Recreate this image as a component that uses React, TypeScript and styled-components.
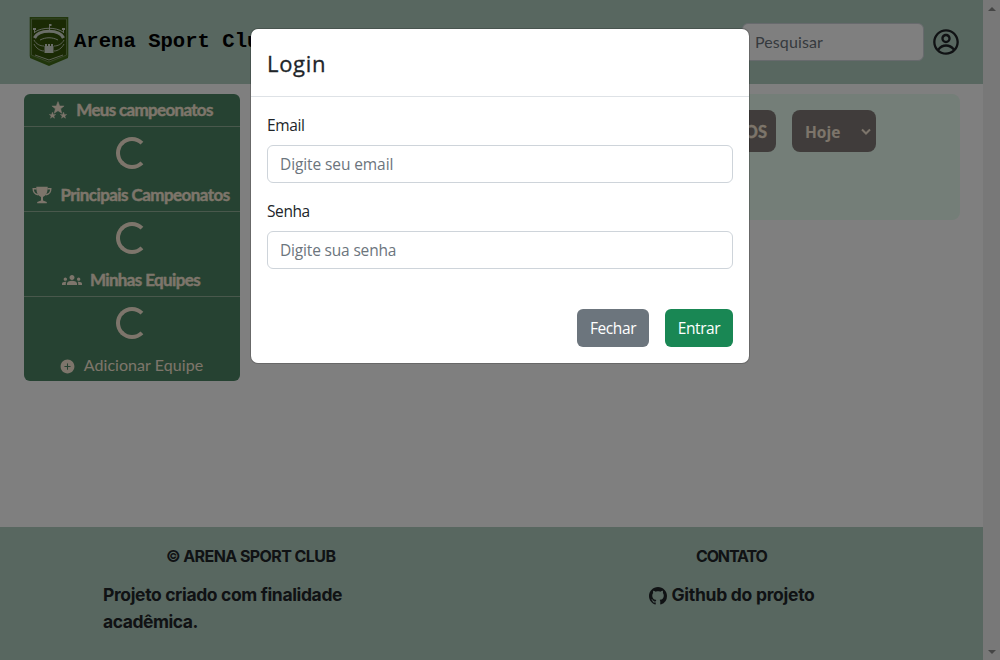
import React from "react";
import styled, { createGlobalStyle } from "styled-components";
import { CgProfile } from "react-icons/cg";
import { IoAddCircle } from "react-icons/io5";
import { MdGroups } from "react-icons/md";
import { BsGithub } from "react-icons/bs";

const GlobalStyle = createGlobalStyle`
  *, *::before, *::after { box-sizing: border-box; }
  body { margin: 0; overflow: hidden; background: #fff; color: #212529; font: 16px/24px "Open Sans", sans-serif; }
`;

const Viewport = styled.div`
  position: relative;
  display: flex;
  height: 660px;
`;
const Page = styled.div`
  flex: 1;
  display: flex;
  flex-direction: column;
`;
const Header = styled.header`
  height: 84px;
  flex: none;
  display: flex;
  align-items: center;
  padding: 0 23px 0 29px;
  background: #b0cec0;
`;
const Brand = styled.div`
  flex: 1;
  display: flex;
  align-items: center;
  gap: 5px;
  font: bold 20.6px/30px "Liberation Mono", monospace;
  color: #000;
`;
const Search = styled.input`
  width: 182px;
  height: 38px;
  margin-right: 8px;
  padding: 5px 12px 7px;
  border: 1px solid #ced4da;
  border-radius: 6px;
  background: #fff;
  font: 16px/24px Lato, sans-serif;
  letter-spacing: 0.1px;
  &::placeholder { color: #6c757d; opacity: 1; }
`;
const Content = styled.div`
  flex: 1;
  display: flex;
  align-items: flex-start;
  gap: 16px;
  padding: 10px 23px 0 24px;
`;
const Sidebar = styled.aside`
  width: 216px;
  height: 287px;
  border-radius: 6px;
  background: #4c8464;
  color: #faebd7;
  font-family: Lato, sans-serif;
`;
const SideTitle = styled.div<{ $plain?: boolean; $gap: number; $spacing: number }>`
  height: ${(p) => (p.$plain ? 32 : 33)}px;
  display: flex;
  align-items: center;
  justify-content: center;
  gap: ${(p) => p.$gap}px;
  padding-right: 2px;
  border-bottom: ${(p) => (p.$plain ? "none" : "1px solid #92b099")};
  font-size: ${(p) => (p.$plain ? 16 : 17)}px;
  font-weight: ${(p) => (p.$plain ? 400 : 700)};
  -webkit-text-stroke: ${(p) => (p.$plain ? 0 : 0.4)}px currentColor;
  letter-spacing: ${(p) => p.$spacing}px;
  white-space: nowrap;
  svg { flex: none; margin-top: ${(p) => (p.$plain ? 2 : 0)}px; }
`;
const SpinnerBox = styled.div`
  height: 52px;
  display: flex;
  justify-content: center;
  align-items: center;
`;
const Spinner = styled.div`
  width: 32px;
  height: 32px;
  border: 4px solid #faebd7;
  border-right-color: transparent;
  border-radius: 50%;
`;
const Panel = styled.main`
  flex: 1;
  height: 126px;
  display: flex;
  justify-content: flex-end;
  gap: 16px;
  padding: 16px 84px 0 16px;
  border-radius: 8px;
  background: #e8fcf0;
`;
const Pill = styled.button<{ $width: number }>`
  width: ${(p) => p.$width}px;
  height: 42px;
  display: flex;
  align-items: center;
  justify-content: space-between;
  padding: 2px 5px 0 13px;
  border: 0;
  border-radius: 8px;
  background: #807976;
  color: #faebd7;
  font: 700 15.5px/24px "Open Sans", sans-serif;
`;
const LivePill = styled(Pill)`
  padding: 1px 9px 0;
  justify-content: flex-end;
  font: 700 16.5px/24px Lato, sans-serif;
  -webkit-text-stroke: 0.4px currentColor;
`;
const Footer = styled.footer`
  height: 133px;
  flex: none;
  display: grid;
  grid-template-columns: 492px 1fr;
  background: #b0cec0;
  font-family: Inter, sans-serif;
  font-weight: 700;
`;
const FooterColumn = styled.div<{ $left: number; $width: number }>`
  width: ${(p) => p.$width}px;
  margin-left: ${(p) => p.$left}px;
  padding-top: 17px;
`;
const FooterHeading = styled.div<{ $indent: number; $spacing: number }>`
  padding-left: ${(p) => p.$indent}px;
  margin-bottom: 13px;
  font-size: 16px;
  letter-spacing: ${(p) => p.$spacing}px;
`;
const FooterText = styled.div<{ $spacing: number }>`
  display: flex;
  align-items: center;
  gap: 4.5px;
  font-size: 17.5px;
  line-height: 27px;
  letter-spacing: ${(p) => p.$spacing}px;
  white-space: nowrap;
  svg { margin-top: 2px; }
`;
const ScrollTrack = styled.div`
  width: 17px;
  display: flex;
  flex-direction: column;
  justify-content: space-between;
  align-items: center;
  padding: 7px 0 6px;
  background: #f1f1f1;
`;
const Arrow = styled.div<{ $up?: boolean }>`
  border: 4px solid transparent;
  border-${(p) => (p.$up ? "top" : "bottom")}: 0;
  border-${(p) => (p.$up ? "bottom" : "top")}: 4px solid #8a8a8a;
`;
const Backdrop = styled.div`
  position: absolute;
  inset: 0;
  display: flex;
  justify-content: center;
  align-items: flex-start;
  padding-top: 28px;
  background: rgba(0, 0, 0, 0.5);
`;
const Dialog = styled.form`
  width: 500px;
  height: 336px;
  border: 1px solid rgba(0, 0, 0, 0.175);
  border-radius: 8px;
  background: #fff;
  background-clip: padding-box;
`;
const DialogHeader = styled.div`
  height: 68px;
  padding: 19px 16px;
  border-bottom: 1px solid #dee2e6;
  font-size: 22px;
  line-height: 30px;
  font-weight: 500;
  letter-spacing: 0.7px;
  -webkit-text-stroke: 0.3px currentColor;
`;
const DialogBody = styled.div`
  padding: 16px;
  display: flex;
  flex-direction: column;
  gap: 16px;
`;
const Field = styled.label`
  display: flex;
  flex-direction: column;
  gap: 8px;
`;
const FieldLabel = styled.span<{ $spacing: number }>`
  height: 24px;
  font-size: 15.5px;
  letter-spacing: ${(p) => p.$spacing}px;
`;
const Input = styled.input<{ $spacing: number }>`
  height: 38px;
  padding: 6px 12px;
  border: 1px solid #ced4da;
  border-radius: 6px;
  font: 15.5px/24px "Open Sans", sans-serif;
  letter-spacing: ${(p) => p.$spacing}px;
  &::placeholder { color: #6c757d; opacity: 1; }
`;
const Actions = styled.div`
  display: flex;
  justify-content: flex-end;
  gap: 16px;
  padding: 24px 16px 0;
`;
const Button = styled.button<{ $color: string; $width: number }>`
  width: ${(p) => p.$width}px;
  height: 38px;
  padding: 0;
  border: 0;
  border-radius: 6px;
  background: ${(p) => p.$color};
  color: #fff;
  font: 15.5px/24px "Open Sans", sans-serif;
  letter-spacing: -0.4px;
`;

const Crest = () => (
  <svg width="40" height="52" viewBox="0 0 40 52">
    <path d="M1 38v4l19 8 19-8v-4z" fill="#3f6b14" />
    <path d="M.7 1h38.6v39.5L20 48 .7 40.500z" fill="#456e1c" />
    <path d="M2.500 3h35v36L20 46 2.500 39z" fill="#345409" stroke="#7d9965" strokeWidth=".8" />
    <g fill="none" stroke="#d5ddd0">
      <path d="M5.500 22c4-9 25-9 29 0" strokeWidth="3.200" />
      <path d="M6 16c7-5 21-5 28 0M11 24c6-3 12-3 18 0" strokeWidth=".9" />
      <path d="M5 24c2 4 6 6 10 6M35 24c-2 4-6 6-10 6M5 28c2 4 6 7 10 7M35 28c-2 4-6 7-10 7M6 39l14 5 14-5" strokeWidth=".8" />
      <path d="M20.500 14V8M5.500 17v-5M34.500 17v-5" strokeWidth=".9" />
    </g>
    <path d="M15.500 30h9v7h-9zM20 8h2.500v2H20zM4 12h3v2H4zM33 12h3v2h-3zM16 28h2v2h-2zM19 28h2v2h-2zM22 28h2v2h-2z" fill="#d5ddd0" />
  </svg>
);

const Stars = () => {
  const star = "M0-10 2.700-3.200 9.500-3.100 4.100 1.300 5.900 8.100 0 4.200-5.900 8.100-4.100 1.300-9.500-3.100-2.700-3.200z";
  return (
    <svg width="18" height="18" viewBox="0 0 18 18" fill="currentColor" stroke="currentColor">
      <path d={star} transform="translate(9 7) scale(.64)" strokeWidth=".8" />
      <path d={star} transform="translate(3.500 14.500) scale(.35)" />
      <path d={star} transform="translate(14.500 14.500) scale(.35)" />
    </svg>
  );
};

const Trophy = () => (
  <svg width="20" height="18" viewBox="0 0 20 18">
    <path d="M4.500 2.700H1.200c0 3.500 1.400 5.600 5 6M15.500 2.700h3.300c0 3.500-1.400 5.600-5 6" fill="none" stroke="currentColor" strokeWidth="1.400" />
    <path d="M4.300.7h11.400C15.700 6 14.500 9.400 11 11v3.500l3.800 1.400v1.400H5.200v-1.400L9 14.500V11C5.500 9.400 4.300 6 4.300.7z" fill="currentColor" />
  </svg>
);

const Loading = () => (
  <SpinnerBox>
    <Spinner />
  </SpinnerBox>
);

export default function App() {
  return (
    <Viewport>
      <GlobalStyle />
      <Page>
        <Header>
          <Brand>
            <Crest />
            <span>Arena Sport Club</span>
          </Brand>
          <Search placeholder="Pesquisar" />
          <CgProfile size={28} />
        </Header>
        <Content>
          <Sidebar>
            <SideTitle $gap={9} $spacing={-0.68}>
              <Stars />
              Meus campeonatos
            </SideTitle>
            <Loading />
            <SideTitle $gap={8} $spacing={-0.56}>
              <Trophy />
              Principais Campeonatos
            </SideTitle>
            <Loading />
            <SideTitle $gap={8} $spacing={-0.62}>
              <MdGroups size={20} />
              Minhas Equipes
            </SideTitle>
            <Loading />
            <SideTitle $plain $gap={8} $spacing={0.06}>
              <IoAddCircle size={17} />
              Adicionar Equipe
            </SideTitle>
          </Sidebar>
          <Panel>
            <LivePill $width={110} type="button">AO VIVOS</LivePill>
            <Pill $width={84} type="button">
              Hoje
              <svg width="10" height="8" viewBox="0 0 10 8" fill="none" stroke="currentColor" strokeWidth="2">
                <path d="M1 1.500l4 4 4-4" />
              </svg>
            </Pill>
          </Panel>
        </Content>
        <Footer>
          <FooterColumn $left={103} $width={260}>
            <FooterHeading $indent={63} $spacing={-0.58}>© ARENA SPORT CLUB</FooterHeading>
            <FooterText $spacing={-0.36}>Projeto criado com finalidade</FooterText>
            <FooterText $spacing={-0.45}>acadêmica.</FooterText>
          </FooterColumn>
          <FooterColumn $left={157} $width={200}>
            <FooterHeading $indent={47} $spacing={-1.15}>CONTATO</FooterHeading>
            <FooterText $spacing={-0.28}>
              <BsGithub size={18} />
              Github do projeto
            </FooterText>
          </FooterColumn>
        </Footer>
      </Page>
      <ScrollTrack>
        <Arrow $up />
        <Arrow />
      </ScrollTrack>
      <Backdrop>
        <Dialog>
          <DialogHeader>Login</DialogHeader>
          <DialogBody>
            <Field>
              <FieldLabel $spacing={-0.4}>Email</FieldLabel>
              <Input $spacing={-0.1} placeholder="Digite seu email" />
            </Field>
            <Field>
              <FieldLabel $spacing={-0.4}>Senha</FieldLabel>
              <Input $spacing={-0.17} placeholder="Digite sua senha" />
            </Field>
          </DialogBody>
          <Actions>
            <Button type="button" $width={72} $color="#6c757d">Fechar</Button>
            <Button type="button" $width={68} $color="#198754">Entrar</Button>
          </Actions>
        </Dialog>
      </Backdrop>
    </Viewport>
  );
}
